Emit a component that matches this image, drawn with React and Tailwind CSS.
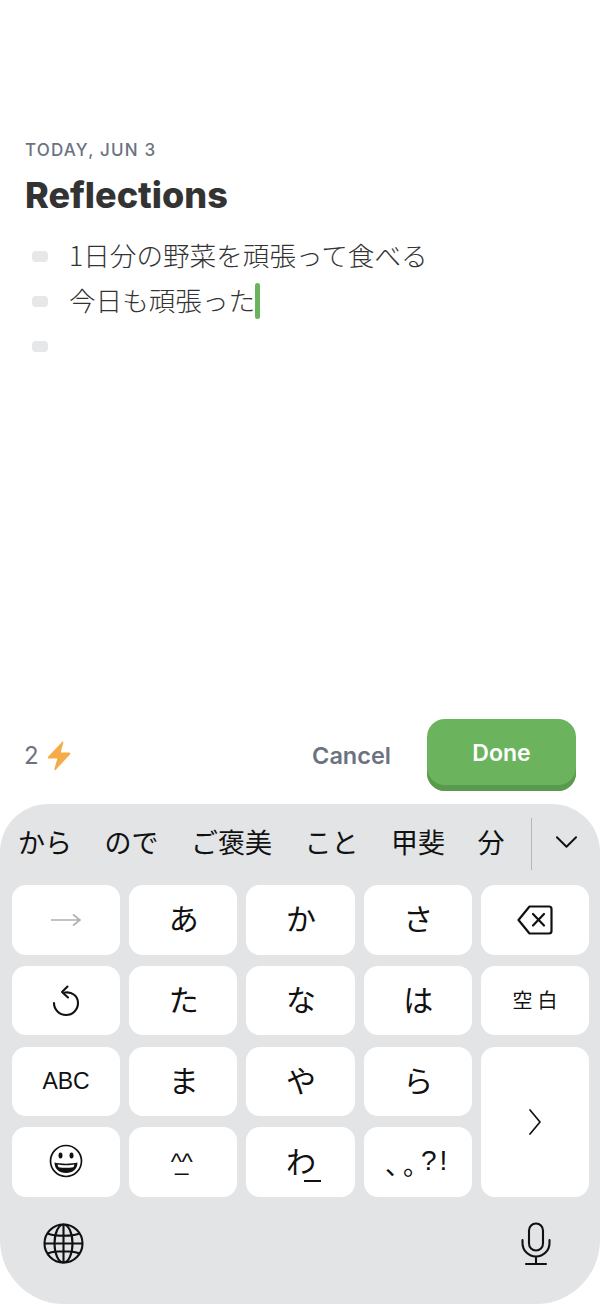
import React from "react";

const JP = { fontFamily: '"Noto Sans CJK JP", sans-serif' };
const LATIN = { fontFamily: '"Liberation Sans", sans-serif' };

function Bolt() {
  return (
    <svg width="24" height="30" viewBox="0 0 24 30" fill="#f5ab47">
      <path d="M15.2 0.8 C15.9 0.3 16.6 0.8 16.3 1.7 L13.6 11.6 L22 11.6 C23.2 11.6 23.6 12.6 22.9 13.4 L8.6 29 C7.9 29.7 7 29.2 7.3 28.2 L10.4 17.6 L2 17.6 C0.8 17.6 0.4 16.6 1.1 15.8 Z" />
    </svg>
  );
}

function ArrowRight() {
  return (
    <svg width="32" height="14" viewBox="0 0 32 14" fill="none" stroke="#b0b0b0" strokeWidth="1.6">
      <path d="M1 7H30M23 1.5L30 7L23 12.5" />
    </svg>
  );
}

function Undo() {
  return (
    <svg width="28" height="32" viewBox="0 0 28 32" fill="none" stroke="#111" strokeWidth="2.1" strokeLinecap="round" strokeLinejoin="round">
      <path d="M13 7.5C20 6.5 26 11 26 18C26 24.6 20.8 30 14 30C7.4 30 2 24.6 2 18" />
      <path d="M15.5 1.5L10 7L16 12.5" />
    </svg>
  );
}

function Backspace() {
  return (
    <svg width="36" height="30" viewBox="0 0 36 30" fill="none" stroke="#111" strokeWidth="2.2" strokeLinejoin="round" strokeLinecap="round">
      <path d="M12.5 1.5H32C33.5 1.5 34.5 2.5 34.5 4V26C34.5 27.5 33.5 28.5 32 28.5H12.5L1.5 15Z" />
      <path d="M16 9L27 20.5M27 9L16 20.5" />
    </svg>
  );
}

function Smile() {
  return (
    <svg width="34" height="34" viewBox="0 0 34 34" fill="none">
      <circle cx="17" cy="17" r="15.5" stroke="#111" strokeWidth="1.7" />
      <ellipse cx="11.5" cy="11.5" rx="2" ry="3" fill="#111" />
      <ellipse cx="22.5" cy="11.5" rx="2" ry="3" fill="#111" />
      <path d="M5.5 18.5C10 20 24 20 28.5 18.5C28.5 25 23.5 29 17 29C10.5 29 5.5 25 5.5 18.5Z" fill="#111" />
      <path d="M8.5 20.5C12 21.5 22 21.5 25.5 20.5C25 22 24.8 22.8 24.3 23.3C20 24 14 24 9.7 23.3C9.2 22.8 9 22 8.5 20.5Z" fill="#fff" />
    </svg>
  );
}

function Globe() {
  return (
    <svg width="41" height="41" viewBox="0 0 41 41" fill="none" stroke="#111" strokeWidth="2.1">
      <circle cx="20.5" cy="20.5" r="19" />
      <ellipse cx="20.5" cy="20.5" rx="9" ry="19" />
      <path d="M20.5 1.5V39.5M1.5 20.5H39.5M4.5 10.5C12 13.5 29 13.5 36.5 10.5M4.5 30.5C12 27.5 29 27.5 36.5 30.5" />
    </svg>
  );
}

function Mic() {
  return (
    <svg width="30" height="44" viewBox="0 0 30 44" fill="none" stroke="#111" strokeWidth="2.1" strokeLinecap="round">
      <rect x="8" y="1.5" width="14" height="27" rx="7" />
      <path d="M1.5 18V21C1.5 28.5 7.5 34.5 15 34.5C22.5 34.5 28.5 28.5 28.5 21V18M15 34.5V42M5 42H25" />
    </svg>
  );
}

function Chevron({ className }) {
  return (
    <svg className={className} viewBox="0 0 24 14" fill="none" stroke="#111" strokeWidth="2" strokeLinecap="round" strokeLinejoin="round">
      <path d="M2 2L12 12L22 2" />
    </svg>
  );
}

function Key({ children, className = "" }) {
  return (
    <div className={`bg-white rounded-[14px] flex items-center justify-center text-[#111] leading-none ${className}`} style={JP}>
      {children}
    </div>
  );
}

// kana keys sit a little above the middle of the key
function KanaKey({ children }) {
  return <Key className="text-[30px] pb-[5px] pl-[1px]">{children}</Key>;
}

function BulletRow({ children }) {
  return (
    <div className="h-[45px] flex items-center">
      <div className="w-4 h-[11px] rounded-[4px] bg-[#e6e7e9] ml-[7px] mr-[21px] shrink-0" />
      <div className="flex items-center -mt-[3px]">{children}</div>
    </div>
  );
}

export default function App() {
  return (
    <div className="w-[600px] h-[1304px] bg-white flex flex-col overflow-hidden" style={{ fontFamily: 'Inter, "Noto Sans CJK JP", sans-serif' }}>
      <div className="pt-[141px] pl-[25px]">
        <div className="text-[#6b7280] text-[17px] leading-[19px] font-medium tracking-[1.2px]">TODAY, JUN 3</div>
        <h1 className="mt-[15px] text-[#333333] text-[36px] leading-[40px] font-extrabold">Reflections</h1>
      </div>

      <div className="mt-[18.5px] pl-[25px] text-[#333333] text-[26.6px] font-light" style={JP}>
        <BulletRow>1日分の野菜を頑張って食べる</BulletRow>
        <BulletRow>
          今日も頑張った
          <span className="inline-block w-[5px] h-[36px] mt-[3px] rounded-full bg-[#6cb35e]" />
        </BulletRow>
        <BulletRow />
      </div>

      <div className="mt-auto pl-[24px] pr-[24px] flex items-center">
        <span className="text-[#6b7280] text-[24px] leading-none mt-[1px]">2</span>
        <span className="ml-[8px] mt-[1px]"><Bolt /></span>
        <span className="ml-auto text-[#6b7280] text-[23.5px] font-semibold leading-none mt-[1px]">Cancel</span>
        <button className="ml-[36px] w-[149px] h-[72px] pb-[4px] rounded-[18px] bg-[#6cb35e] shadow-[inset_0_-6px_0_#5a9a4c] text-white text-[23px] font-semibold">
          Done
        </button>
      </div>

      <div className="mt-[13px] h-[500px] bg-[#e2e4e6] rounded-t-[48px] rounded-b-[64px] shrink-0">
        <div className="h-[76px] pl-[18px] pr-[22px] flex items-center text-[#111] text-[27px] leading-none" style={JP}>
          <div className="flex gap-[32.5px] -mt-[2px]">
            <span>から</span>
            <span>ので</span>
            <span>ご褒美</span>
            <span>こと</span>
            <span>甲斐</span>
            <span>分</span>
          </div>
          <div className="ml-[26px] w-px h-[52px] mt-[4px] bg-[#b5b7ba]" />
          <Chevron className="ml-auto w-[23px] h-[14px]" />
        </div>

        <div className="mt-[5px] pl-3 pr-[11px] grid grid-cols-5 grid-rows-[repeat(4,69.5px)] gap-x-[9px] gap-y-[11.3px]">
          <Key><ArrowRight /></Key>
          <KanaKey>あ</KanaKey>
          <KanaKey>か</KanaKey>
          <KanaKey>さ</KanaKey>
          <Key><Backspace /></Key>
          <Key><Undo /></Key>
          <KanaKey>た</KanaKey>
          <KanaKey>な</KanaKey>
          <KanaKey>は</KanaKey>
          <Key className="text-[20px] tracking-[5px] pl-[5px] pb-[2px]">空白</Key>
          <Key className="text-[23px]"><span style={LATIN}>ABC</span></Key>
          <KanaKey>ま</KanaKey>
          <KanaKey>や</KanaKey>
          <KanaKey>ら</KanaKey>
          <Key className="row-span-2">
            <svg width="14" height="28" viewBox="0 0 14 28" fill="none" stroke="#111" strokeWidth="1.7" strokeLinecap="round" strokeLinejoin="round">
              <path d="M2 2L12 14L2 26" />
            </svg>
          </Key>
          <Key className="pb-[2px]"><Smile /></Key>
          <Key className="text-[24px] pr-[10px]">
            <span className="tracking-[-7px]" style={LATIN}>^_^</span>
          </Key>
          <Key className="text-[30px] pb-[5px] pl-[6px]">
            <span>わ</span>
            <span className="self-end mb-[10px] -ml-[12px] w-[17px] h-[2px] bg-[#111]" />
          </Key>
          <Key className="pb-[3px]">
            <span className="text-[26px] tracking-[5px] pt-[6px] [font-feature-settings:'halt']">、。</span>
            <span className="text-[28px] tracking-[3px]" style={LATIN}>?!</span>
          </Key>
        </div>

        <div className="mt-[25px] pl-[43px] pr-[49px] flex items-center justify-between">
          <Globe />
          <Mic />
        </div>
      </div>
    </div>
  );
}
